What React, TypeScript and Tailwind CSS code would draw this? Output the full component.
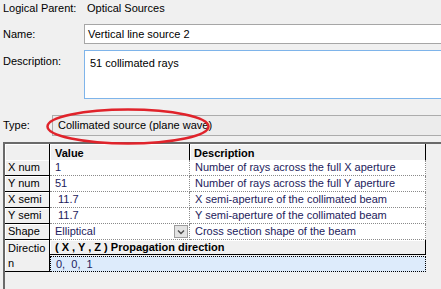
const hdr = 'bg-[#f0f0f0] border-r border-b border-black shadow-[inset_1px_1px_0_#ffffff]';
const val = 'bg-white border-r border-b border-dotted border-[#8a8a8a] text-[#1d1b5c] pl-[5px] whitespace-pre leading-[15px]';

const rows = [
  { name: 'X num', value: '1', desc: 'Number of rays across the full X aperture' },
  { name: 'Y num', value: '51', desc: 'Number of rays across the full Y aperture' },
  { name: 'X semi', value: ' 11.7', desc: 'X semi-aperture of the collimated beam' },
  { name: 'Y semi', value: ' 11.7', desc: 'Y semi-aperture of the collimated beam' },
];

const App = () => (
  <div
    className="relative w-[441px] h-[289px] overflow-hidden bg-[#f0f0f0] text-[11px] text-black flex flex-col"
    style={{ fontFamily: '"Liberation Sans", Arial, sans-serif' }}
  >
    {/* form fields */}
    <div className="flex items-center h-[17px] pl-[3px]">
      <span className="w-[84px]">Logical Parent:</span>
      <span>Optical Sources</span>
    </div>

    <div className="flex items-center mt-[7px] pl-[3px]">
      <span className="w-[81px]">Name:</span>
      <div className="flex-1 h-[20px] bg-white border border-[#a6a6a6] -mr-[4px] pl-[3px] flex items-center">
        Vertical line source 2
      </div>
    </div>

    <div className="flex items-start mt-[6px] pl-[3px]">
      <span className="w-[81px] pt-[3px]">Description:</span>
      <div className="flex-1 h-[49px] bg-white border border-[#7eb4ea] -mr-[4px] pl-[5px] pt-[4px]">
        51 collimated rays
      </div>
    </div>

    <div className="flex items-center mt-[16px] pl-[3px]">
      <span className="w-[49px]">Type:</span>
      <div className="flex-1 h-[21px] bg-[#ececec] border border-[#acacac] -mr-[4px] pl-[5px] flex items-center">
        Collimated source (plane wave)
      </div>
    </div>

    {/* property grid */}
    <div className="flex-1 mt-[6px] ml-[3px] border-t-2 border-l-2 border-[#6a6a6a] bg-[#f0f0f0]">
      <div className="grid grid-cols-[45px_140px_236px] auto-rows-[16px]">
        <div className={`${hdr} h-[20px]`} />
        <div className={`${hdr} h-[20px] font-bold pl-[5px] flex items-center`}>Value</div>
        <div className={`${hdr} h-[20px] font-bold pl-[4px] flex items-center`}>Description</div>

        {rows.map((r) => (
          <div key={r.name} className="contents">
            <div className={`${hdr} pl-[3px] leading-[15px]`}>{r.name}</div>
            <div className={val}>{r.value}</div>
            <div className={`${val} pl-[3px]`}>{r.desc}</div>
          </div>
        ))}

        <div className={`${hdr} pl-[3px] leading-[15px]`}>Shape</div>
        <div className={`${val} flex items-center justify-between pr-[1px]`}>
          <span>Elliptical</span>
          <span className="w-[14px] h-[13px] border border-[#9c9c9c] bg-[#e3e3e3] flex items-center justify-center">
            <svg width="8" height="6" viewBox="0 0 8 6">
              <path d="M1 1.5 L4 4.5 L7 1.5" fill="none" stroke="#4a4a4a" strokeWidth="1.4" />
            </svg>
          </span>
        </div>
        <div className={`${val} pl-[3px]`}>Cross section shape of the beam</div>

        <div className={`${hdr} row-span-2 pl-[3px] pt-[1px] leading-[15px] break-all`}>Direction</div>
        <div className={`${hdr} col-span-2 h-[15px] font-bold pl-[5px] leading-[14px]`}>
          ( X , Y , Z ) Propagation direction
        </div>
        <div className="col-span-2 bg-[#ddebfb] border border-dotted border-black pl-[5px] leading-[14px] text-[#1d1b5c] whitespace-pre">
          0,  0,  1
        </div>
      </div>
    </div>

    {/* red annotation */}
    <svg className="absolute left-[45px] top-[107px]" width="166" height="40" viewBox="0 0 166 40">
      <ellipse cx="83" cy="19.5" rx="80.5" ry="17" fill="none" stroke="#e0232b" strokeWidth="2.5" />
    </svg>
  </div>
);

export default App;
